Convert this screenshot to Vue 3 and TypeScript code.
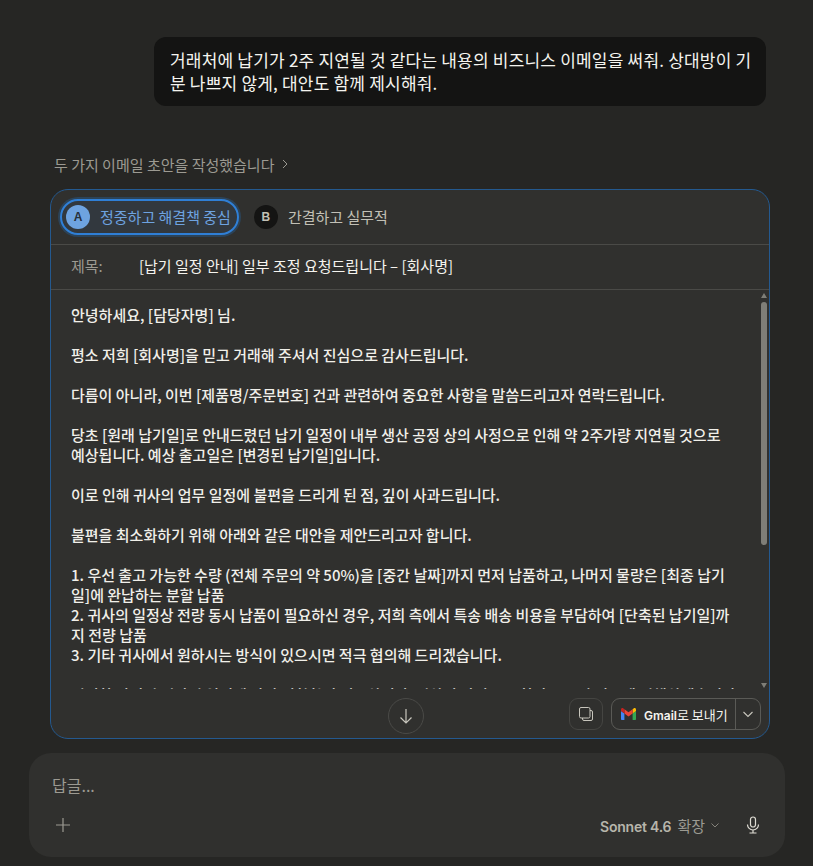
<script setup lang="ts">
  import { ref } from 'vue'

  const activeTab = ref('A')
  const tabs = [
    { id: 'A', label: '정중하고 해결책 중심' },
    { id: 'B', label: '간결하고 실무적' },
  ]

  const lines = [
    '안녕하세요, [담당자명] 님.',
    '',
    '평소 저희 [회사명]을 믿고 거래해 주셔서 진심으로 감사드립니다.',
    '',
    '다름이 아니라, 이번 [제품명/주문번호] 건과 관련하여 중요한 사항을 말씀드리고자 연락드립니다.',
    '',
    '당초 [원래 납기일]로 안내드렸던 납기 일정이 내부 생산 공정 상의 사정으로 인해 약 2주가량 지연될 것으로',
    '예상됩니다. 예상 출고일은 [변경된 납기일]입니다.',
    '',
    '이로 인해 귀사의 업무 일정에 불편을 드리게 된 점, 깊이 사과드립니다.',
    '',
    '불편을 최소화하기 위해 아래와 같은 대안을 제안드리고자 합니다.',
    '',
    '1. 우선 출고 가능한 수량 (전체 주문의 약 50%)을 [중간 날짜]까지 먼저 납품하고, 나머지 물량은 [최종 납기',
    '일]에 완납하는 분할 납품',
    '2. 귀사의 일정상 전량 동시 납품이 필요하신 경우, 저희 측에서 특송 배송 비용을 부담하여 [단축된 납기일]까',
    '지 전량 납품',
    '3. 기타 귀사에서 원하시는 방식이 있으시면 적극 협의해 드리겠습니다.',
    '',
    '어떠한 방식이 귀사의 일정에 가장 적합할지 검토하신 후 편하신 방법으로 회신 주시면 빠르게 진행하겠습니다.',
  ]
</script>

<template>
  <div class="page">
    <div class="user-row">
      <div class="bubble">
        거래처에 납기가 2주 지연될 것 같다는 내용의 비즈니스 이메일을 써줘. 상대방이 기<br />분 나쁘지 않게, 대안도 함께 제시해줘.
      </div>
    </div>

    <div class="thinking">
      <span>두 가지 이메일 초안을 작성했습니다</span>
      <svg width="12" height="12" viewBox="0 0 12 12" fill="none">
        <path d="M4 2l4 4-4 4" stroke="#9c9a92" stroke-width="1" />
      </svg>
    </div>

    <section class="card">
      <div class="tabs">
        <button
          v-for="tab in tabs"
          :key="tab.id"
          class="tab"
          :class="{ active: activeTab === tab.id }"
          @click="activeTab = tab.id">
          <span class="badge">{{ tab.id }}</span>
          <span class="tab-label">{{ tab.label }}</span>
        </button>
      </div>

      <div class="subject">
        <span class="subject-label">제목:</span>
        <span class="subject-text">[납기 일정 안내] 일부 조정 요청드립니다 – [회사명]</span>
      </div>

      <div class="body-wrap">
        <div class="body-text">
          <div v-for="(line, i) in lines" :key="i" class="line">{{ line || ' ' }}</div>
        </div>
        <div class="scrollbar">
          <i class="arrow up"></i>
          <i class="thumb"></i>
          <i class="arrow down"></i>
        </div>
      </div>

      <div class="card-footer">
        <button class="down-btn">
          <svg width="20" height="20" viewBox="0 0 20 20" fill="none" stroke="#c8c6bd" stroke-width="1.2">
            <path d="M10 3v14M4.500 11.500L10 17l5.500-5.500" />
          </svg>
        </button>
        <div class="actions">
          <button class="copy-btn">
            <svg width="16" height="16" viewBox="0 0 16 16" fill="none" stroke="#c8c6bd" stroke-width="1">
              <rect x="1.500" y="1.500" width="10.500" height="10.500" rx="1.500" />
              <path d="M12 4.500h1a1.500 1.500 0 0 1 1.500 1.500v7a1.500 1.500 0 0 1-1.500 1.500H6a1.500 1.500 0 0 1-1.500-1.500v-1" />
            </svg>
          </button>
          <div class="gmail">
            <button class="gmail-main">
              <svg width="15" height="12" viewBox="0 0 15 12">
                <path d="M1 12h2.400V5.400L0 3v7.900C0 11.500.5 12 1 12z" fill="#4285f4" />
                <path d="M11.600 12H14c.6 0 1-.5 1-1.100V3l-3.400 2.400z" fill="#34a853" />
                <path d="M11.600 1.200v4.200L15 3V1.500C15 .3 13.600-.4 12.600.4z" fill="#fbbc04" />
                <path d="M3.400 5.400V1.200l4.100 3.100 4.100-3.100v4.200L7.500 8.500z" fill="#ea4335" />
                <path d="M0 1.500V3l3.400 2.400V1.200L2.400.4C1.400-.4 0 .3 0 1.500z" fill="#c5221f" />
              </svg>
              <span><b>Gmail</b>로 보내기</span>
            </button>
            <button class="gmail-more">
              <svg width="12" height="12" viewBox="0 0 12 12" fill="none" stroke="#c8c6bd" stroke-width="1.100">
                <path d="M1.500 4l4.500 4.500L10.500 4" />
              </svg>
            </button>
          </div>
        </div>
      </div>
    </section>

    <section class="composer">
      <div class="placeholder">답글...</div>
      <div class="composer-row">
        <svg class="plus" width="16" height="16" viewBox="0 0 16 16" fill="none" stroke="#9c9a92" stroke-width="1.200">
          <path d="M8 1v14M1 8h14" />
        </svg>
        <div class="composer-right">
          <span class="model"><b>Sonnet 4.6</b><em>확장</em></span>
          <svg class="model-caret" width="10" height="10" viewBox="0 0 10 10" fill="none" stroke="#85837b" stroke-width="1">
            <path d="M1.500 3.500L5 7l3.500-3.500" />
          </svg>
          <svg class="mic" width="16" height="18" viewBox="0 0 16 18" fill="none" stroke="#dedcd3" stroke-width="1.200">
            <rect x="5.500" y="1" width="5" height="10" rx="2.500" />
            <path d="M2.500 8.500a5.500 5.500 0 0 0 11 0M8 14v3M4.500 17h7" />
          </svg>
        </div>
      </div>
    </section>

    <div class="disclaimer">Claude는 AI이며 실수할 수 있습니다. 응답을 다시 한번 확인해 주세요.</div>
  </div>
</template>

<style>
  html,
  body {
    margin: 0;
    background: #262624;
    overflow: hidden;
  }
</style>

<style scoped>
  .page {
    height: 866px;
    overflow: hidden;
    box-sizing: border-box;
    padding-top: 37px;
    background: #262624;
    color: #f5f4ef;
    font-family: 'Noto Sans CJK KR', 'Liberation Sans', sans-serif;
  }
  button {
    font-family: inherit;
    background: none;
    border: none;
    padding: 0;
    color: inherit;
    cursor: pointer;
  }
  .user-row {
    display: flex;
    justify-content: flex-end;
    padding-right: 47px;
  }
  .bubble {
    width: 612px;
    height: 69px;
    box-sizing: border-box;
    padding: 11px 16px;
    border-radius: 12px;
    background: #141413;
    font-size: 17px;
    line-height: 23px;
    white-space: nowrap;
    letter-spacing: 0.2px;
  }
  .thinking {
    display: flex;
    align-items: center;
    gap: 5px;
    margin: 48px 0 0 54px;
    height: 20px;
    font-size: 15px;
    color: #9c9a92;
  }
  .card {
    margin: 15px 0 0 50px;
    width: 720px;
    height: 550px;
    box-sizing: border-box;
    border: 1px solid #24598f;
    border-radius: 18px;
    background: #30302e;
    display: flex;
    flex-direction: column;
    overflow: hidden;
  }
  .tabs {
    height: 55px;
    flex: none;
    box-sizing: border-box;
    border-bottom: 1px solid #4a4a47;
    display: flex;
    align-items: center;
    gap: 9px;
    padding-left: 9px;
  }
  .tab {
    display: flex;
    align-items: center;
    gap: 10px;
    height: 36px;
    box-sizing: border-box;
    padding: 0 6px 0 4px;
    border-radius: 18px;
    font-size: 15px;
    color: #c2c0b6;
    border: 2px solid transparent;
  }
  .tab-label {
    margin-top: -2px;
  }
  .tab.active {
    color: #6ea3e0;
    border-color: #2f7fd6;
    background: #32383e;
    box-shadow: 0 0 0 2px #2c4358;
  }
  .badge {
    width: 24px;
    height: 24px;
    border-radius: 50%;
    background: #141413;
    color: #c2c0b6;
    font: 700 12px 'Liberation Sans', sans-serif;
    display: flex;
    align-items: center;
    justify-content: center;
  }
  .active .badge {
    background: #6ea3e0;
    color: #26303a;
  }
  .subject {
    height: 45px;
    flex: none;
    box-sizing: border-box;
    border-bottom: 1px solid #4a4a47;
    display: flex;
    align-items: center;
    padding: 0 0 3px 20px;
    font-size: 15px;
  }
  .subject-label {
    width: 68px;
    color: #9c9a92;
  }
  .subject-text {
    color: #f5f4ef;
  }
  .body-wrap {
    position: relative;
    flex: none;
    height: 399px;
    overflow: hidden;
  }
  .body-text {
    padding: 15px 0 0 20px;
    font-size: 15px;
    font-weight: 500;
    line-height: 20px;
    color: #f0efe9;
  }
  .line {
    white-space: pre;
    height: 20px;
  }
  .scrollbar {
    position: absolute;
    top: 0;
    right: 0;
    width: 12px;
    height: 100%;
    background: #30302e;
  }
  .thumb {
    position: absolute;
    top: 12px;
    left: 4px;
    width: 6px;
    height: 243px;
    border-radius: 3px;
    background: #7f7e77;
  }
  .arrow {
    position: absolute;
    left: 4px;
    width: 0;
    height: 0;
    border-left: 3px solid transparent;
    border-right: 3px solid transparent;
  }
  .arrow.up {
    top: 3px;
    border-bottom: 5px solid #7f7e77;
  }
  .arrow.down {
    bottom: 1px;
    border-top: 5px solid #7f7e77;
  }
  .card-footer {
    position: relative;
    flex: 1;
    display: flex;
    align-items: flex-start;
    justify-content: flex-end;
    padding: 9px 8px 0 0;
  }
  .down-btn {
    position: absolute;
    left: 337px;
    top: 9px;
    width: 36px;
    height: 36px;
    box-sizing: border-box;
    border: 1px solid #4a4a47;
    border-radius: 50%;
    display: flex;
    align-items: center;
    justify-content: center;
  }
  .actions {
    display: flex;
    gap: 8px;
  }
  .copy-btn {
    width: 34px;
    height: 32px;
    box-sizing: border-box;
    border: 1px solid #454542;
    border-radius: 9px;
    display: flex;
    align-items: center;
    justify-content: center;
  }
  .gmail {
    display: flex;
    height: 32px;
    box-sizing: border-box;
    border: 1px solid #5a5a56;
    border-radius: 9px;
  }
  .gmail-main {
    width: 124px;
    display: flex;
    align-items: center;
    gap: 8px;
    padding-left: 9px;
    box-sizing: border-box;
    font-size: 13px;
    border-right: 1px solid #5a5a56;
    color: #f5f4ef;
    white-space: nowrap;
  }
  .gmail-main b {
    font-family: 'Inter', sans-serif;
    font-size: 12px;
    font-weight: 600;
  }
  .gmail-more {
    width: 24px;
    display: flex;
    align-items: center;
    justify-content: center;
  }
  .composer {
    margin: 14px 0 0 29px;
    width: 756px;
    height: 104px;
    box-sizing: border-box;
    border-radius: 22px;
    background: #30302e;
    padding: 22px 24px 0 23px;
  }
  .placeholder {
    font-size: 16px;
    line-height: 20px;
    color: #9c9a92;
  }
  .composer-row {
    margin-top: 20px;
    display: flex;
    align-items: center;
    justify-content: space-between;
    height: 20px;
  }
  .plus {
    margin-left: 3px;
  }
  .composer-right {
    display: flex;
    align-items: center;
  }
  .model {
    font-size: 14px;
    color: #9c9a92;
  }
  .model b {
    font-family: 'Inter', sans-serif;
    font-weight: 600;
    color: #b7b5ab;
    letter-spacing: -0.2px;
  }
  .model em {
    font-style: normal;
    font-size: 15px;
    margin-left: 6px;
  }
  .model-caret {
    margin-left: 5px;
  }
  .mic {
    margin-left: 25px;
  }
  .disclaimer {
    margin-top: 9px;
    text-align: center;
    font-size: 12px;
    line-height: 16px;
    color: #9c9a92;
  }
</style>
